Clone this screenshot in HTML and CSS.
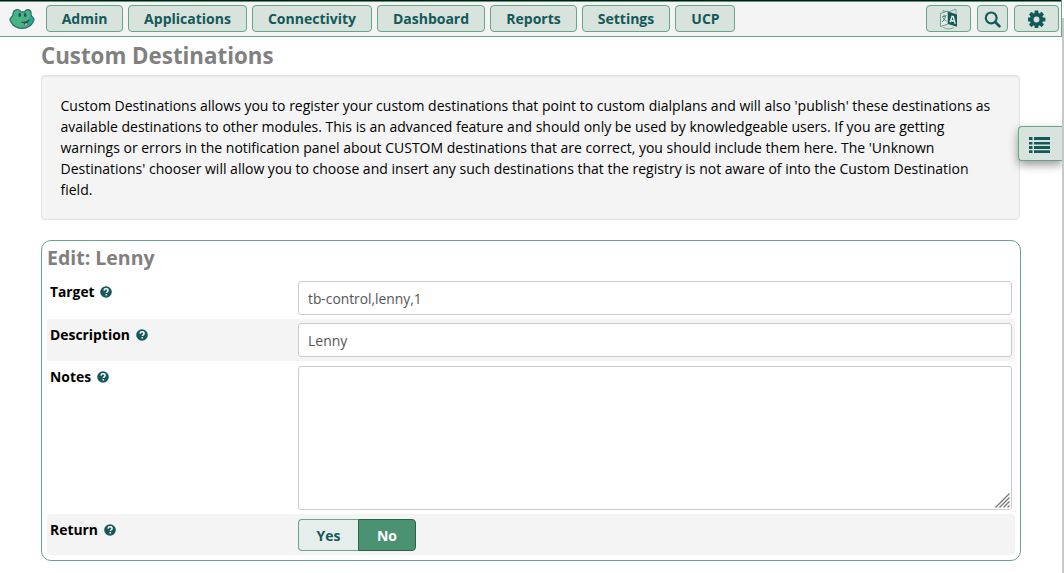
FILE: index.html
```
<!DOCTYPE html>
<html lang="en">
<head>
<meta charset="utf-8">
<title>Custom Destinations</title>
<link rel="stylesheet" href="styles.css">
</head>
<body>
<header class="navbar">
  <svg class="logo" viewBox="0 0 26 22" width="26" height="22">
    <path d="M7.800 1.600C9.800 1.200 11.200 2.200 12 4c1.300-.3 2.300-.3 3.600 0C16.300 2.200 17.500 1.300 19.200 1.600c2.200.4 3 2.100 2.800 4.400 0 1.300.6 2.400 1.700 3.200 1.400 1 1.600 2.200.9 3.800C22.600 17.300 18 20.300 13 20.300S3.400 17.300 1.400 13C.7 11.400.9 10.200 2.300 9.200 3.500 8.400 4 7.300 4 6 4 3.600 5.400 2.100 7.800 1.600Z" fill="#4bb381" stroke="#246c70" stroke-width="1.200"/>
    <path d="M21.300 4.500c.1 2.200.4 4 1.900 5.200 1.200.9 1.300 1.900.7 3.100-1.500 3.400-4.700 5.900-8.400 6.600 3.900-3.600 6.200-9 5.800-14.900Z" fill="#2da294"/>
    <ellipse cx="10.700" cy="7" rx="1.300" ry="2" fill="#145367"/>
    <ellipse cx="16.200" cy="7" rx="1.300" ry="2" fill="#145367"/>
    <path d="M12.800 14.300c3.100.4 5.500-.5 7.400-2.500" fill="none" stroke="#145367" stroke-width="1.200" stroke-linecap="round"/>
    <path d="M14.500 14.500c2 0 3.600-.7 5-1.700-.3 2.900-1.400 4.400-2.900 4.400-1.100-.3-1.800-1.400-2.100-2.700Z" fill="#145367"/>
    <path d="M15.800 15.700l2.700-1-.5 2.600-1.500.3Z" fill="#f6a13c"/>
  </svg>
  <nav class="menu">
    <button class="nav-btn admin">Admin</button>
    <button class="nav-btn applications">Applications</button>
    <button class="nav-btn connectivity">Connectivity</button>
    <button class="nav-btn dashboard">Dashboard</button>
    <button class="nav-btn reports">Reports</button>
    <button class="nav-btn settings">Settings</button>
    <button class="nav-btn ucp">UCP</button>
  </nav>
  <div class="tools">
    <button class="nav-btn wide" aria-label="Language">
      <svg width="20" height="22" viewBox="0 0 20 22">
        <path d="M1.500 5.500 9 3v13L1.500 18.500Z" fill="#e3ece7" stroke="#4c8c7a" stroke-width=".8"/>
        <path d="M9 3.500 18 6.500v12.300l-9-2.800Z" fill="#14595a"/>
        <path d="M4 4.500V2.500L9 4l8-2.800v4.500M4 19c2.500 2.400 7.500 2.500 11 .5" fill="none" stroke="#609b88" stroke-width=".8"/>
        <path d="M3 9 7.500 7.500M5 6.500v2M6.500 8.200c-.6 2.700-1.800 4.600-3.400 5.700M4 9.500c.8 1.800 2 3 3.500 3.500" fill="none" stroke="#39786c" stroke-width=".9"/>
        <path d="m11.100 14.300 2-6 1.100.3 2 7.100M12 12.500l3.200.8" fill="none" stroke="#e6efeb" stroke-width="1.400"/>
      </svg>
    </button>
    <button class="nav-btn slim" aria-label="Search">
      <svg width="18" height="18" viewBox="0 0 18 18"><circle cx="7.200" cy="7.900" r="5.400" fill="none" stroke="#14595a" stroke-width="2.200"/><path d="m11.200 12 4.200 4.200" stroke="#14595a" stroke-width="2.700" stroke-linecap="round"/></svg>
    </button>
    <button class="nav-btn wide" aria-label="Preferences">
      <svg width="18" height="18" viewBox="-8.500 -9.500 18 18">
        <g fill="#14595a"><rect x="-1.900" y="-8.900" width="3.800" height="17.800" rx=".6"/><rect x="-1.900" y="-8.900" width="3.800" height="17.800" rx=".6" transform="rotate(45)"/><rect x="-1.900" y="-8.900" width="3.800" height="17.800" rx=".6" transform="rotate(90)"/><rect x="-1.900" y="-8.900" width="3.800" height="17.800" rx=".6" transform="rotate(135)"/><circle r="6.700"/></g>
        <circle r="2.900" fill="#d7e3dc"/>
      </svg>
    </button>
  </div>
</header>
<div class="scroll-thumb"></div>
<aside class="side-tab">
  <svg width="21" height="17" viewBox="0 0 21 17"><path d="M0 0h3.500v3H0zM5 0h16v3H5zM0 5h3.500v2.600H0zM5 5h16v2.600H5zM0 9h3.500v3H0zM5 9h16v3H5zM0 13.300h3.500V16H0zM5 13.300h16V16H5z" fill="#14595a"/></svg>
</aside>
<main class="page">
  <h1 class="title">Custom Destinations</h1>
  <div class="well">Custom Destinations allows you to register your custom destinations that point to custom dialplans and will also 'publish' these destinations as available destinations to other modules. This is an advanced feature and should only be used by knowledgeable users. If you are getting warnings or errors in the notification panel about CUSTOM destinations that are correct, you should include them here. The 'Unknown Destinations' chooser will allow you to choose and insert any such destinations that the registry is not aware of into the Custom Destination field.</div>
  <section class="panel">
    <h2 class="panel-title">Edit: Lenny</h2>
    <div class="row target">
      <label class="label">Target <span class="help"><svg viewBox="0 0 12 12" width="12" height="12"><circle cx="6" cy="6" r="5.800" fill="#14595a"/><path d="M4 4.600c.1-1.200.9-1.800 2-1.800 1.200 0 2.100.7 2.100 1.700 0 1.300-1.800 1.300-1.800 2.600" fill="none" stroke="#fff" stroke-width="1.500"/><path d="M5.500 8h1.600v1.500H5.500z" fill="#fff"/></svg></span></label>
      <input class="field" type="text" value="tb-control,lenny,1">
    </div>
    <div class="row shaded description">
      <label class="label">Description <span class="help"><svg viewBox="0 0 12 12" width="12" height="12"><circle cx="6" cy="6" r="5.800" fill="#14595a"/><path d="M4 4.600c.1-1.200.9-1.800 2-1.800 1.200 0 2.100.7 2.100 1.700 0 1.300-1.800 1.300-1.800 2.600" fill="none" stroke="#fff" stroke-width="1.500"/><path d="M5.500 8h1.600v1.500H5.500z" fill="#fff"/></svg></span></label>
      <input class="field" type="text" value="Lenny">
    </div>
    <div class="row notes">
      <label class="label">Notes <span class="help"><svg viewBox="0 0 12 12" width="12" height="12"><circle cx="6" cy="6" r="5.800" fill="#14595a"/><path d="M4 4.600c.1-1.200.9-1.800 2-1.800 1.200 0 2.100.7 2.100 1.700 0 1.300-1.800 1.300-1.800 2.600" fill="none" stroke="#fff" stroke-width="1.500"/><path d="M5.500 8h1.600v1.500H5.500z" fill="#fff"/></svg></span></label>
      <div class="area-wrap">
        <textarea class="field area"></textarea>
        <svg class="grip" width="15" height="15" viewBox="0 0 15 15"><path d="M.5 14.500l14-14M4.500 14.500l10-10M8.500 14.500l6-6M12.500 14.500l2-2" stroke="#777" stroke-width="1.300"/></svg>
      </div>
    </div>
    <div class="row shaded return">
      <label class="label">Return <span class="help"><svg viewBox="0 0 12 12" width="12" height="12"><circle cx="6" cy="6" r="5.800" fill="#14595a"/><path d="M4 4.600c.1-1.200.9-1.800 2-1.800 1.200 0 2.100.7 2.100 1.700 0 1.300-1.800 1.300-1.800 2.600" fill="none" stroke="#fff" stroke-width="1.500"/><path d="M5.500 8h1.600v1.500H5.500z" fill="#fff"/></svg></span></label>
      <div class="toggle"><button class="opt yes">Yes</button><button class="opt no">No</button></div>
    </div>
  </section>
</main>
</body>
</html>
```
FILE: styles.css
```
* { box-sizing: border-box; }
body { margin: 0; height: 573px; overflow: hidden; background: #fff; color: #000; font: 14px/21px "Open Sans", "Noto Sans", sans-serif; }
button, input, textarea { font: inherit; margin: 0; }
.navbar { display: flex; width: 1062px; height: 37px; padding: 3px 2px 0 9px; background: linear-gradient(#111 0 1px, #4b9c78 1px 2px, #f4f4f4 2px); border-right: 1px solid #66a587; border-bottom: 1px solid #66a587; }
.logo { flex: none; margin-top: 5px; }
.menu, .tools { display: flex; padding-top: 2px; }
.menu { gap: 5px; margin-left: 11px; }
.tools { gap: 6px; margin-left: auto; }
.nav-btn { display: flex; align-items: center; justify-content: center; height: 27px; padding: 0; border: 1px solid #66a587; border-radius: 4px; background: #d7e3dc; color: #14595a; font-weight: 700; line-height: 20px; }
.admin { width: 77px; }
.applications { width: 119px; }
.connectivity { width: 120px; }
.dashboard { width: 108px; }
.reports { width: 87px; }
.settings { width: 88px; }
.ucp { width: 60px; padding-left: 1px; }
.wide { width: 45px; }
.slim { width: 31px; }
.scroll-thumb { position: absolute; top: 18px; right: 0; width: 2px; height: 555px; background: #c8c8c8; }
.side-tab { position: absolute; top: 126px; left: 1018px; display: flex; align-items: center; width: 44px; height: 35px; padding: 4px 0 0 10px; border: 1px solid #66a587; border-right: 0; border-radius: 4px 0 0 4px; background: #d7e3dc; box-shadow: 0 4px 10px rgba(0,0,0,.4); clip-path: inset(-20px 0 -20px -20px); }
.page { padding: 5px 43px 0 41px; }
.title { margin: 0; height: 33px; color: #808080; font-size: 22.300px; font-weight: 700; line-height: 27px; }
.well { width: 979px; height: 145px; padding: 19px 19px 0 18.500px; border: 1px solid #e3e3e3; border-radius: 4px; background: #f4f4f4; box-shadow: inset 0 1px 1px rgba(0,0,0,.05); }
.panel { width: 980px; height: 321px; margin-top: 20px; padding: 3px 5px; border: 1px solid #66a587; border-radius: 10px; }
.panel-title { margin: 0; height: 33px; color: #808080; font-size: 19.500px; font-weight: 700; line-height: 28px; }
.row { display: flex; padding: 4px 3px 0; border-radius: 3px; }
.shaded { background: #f4f4f4; }
.target { height: 42px; }
.description { height: 42px; }
.notes { height: 153px; padding-top: 5px; }
.return { height: 41px; padding-top: 5px; }
.label { display: flex; align-items: center; gap: 6px; width: 248px; height: 20px; font-size: 13.900px; font-weight: 700; }
.target .label { gap: 5px; font-size: 13.800px; }
.description .label { height: 22px; }
.help { display: flex; padding-top: 1px; }
.field { width: 714px; height: 34px; padding: 1px 9px 0; border: 1px solid #ccc; border-radius: 3px; background: #fff; color: #555; outline: 0; }
.target .field { font-size: 13.800px; }
.area-wrap { position: relative; height: 144px; }
.area { display: block; height: 144px; resize: none; }
.grip { position: absolute; right: 2px; bottom: 2px; }
.toggle { display: flex; height: 32px; }
.opt { padding: 1px 0 0; border: 1px solid #66a587; font-weight: 700; }
.yes { width: 60px; border-right: 0; border-radius: 4px 0 0 4px; background: #e5eeea; color: #14595a; }
.no { width: 58px; border-color: #2f6148; border-radius: 0 4px 4px 0; background: #4b9272; color: #fff; }
```
